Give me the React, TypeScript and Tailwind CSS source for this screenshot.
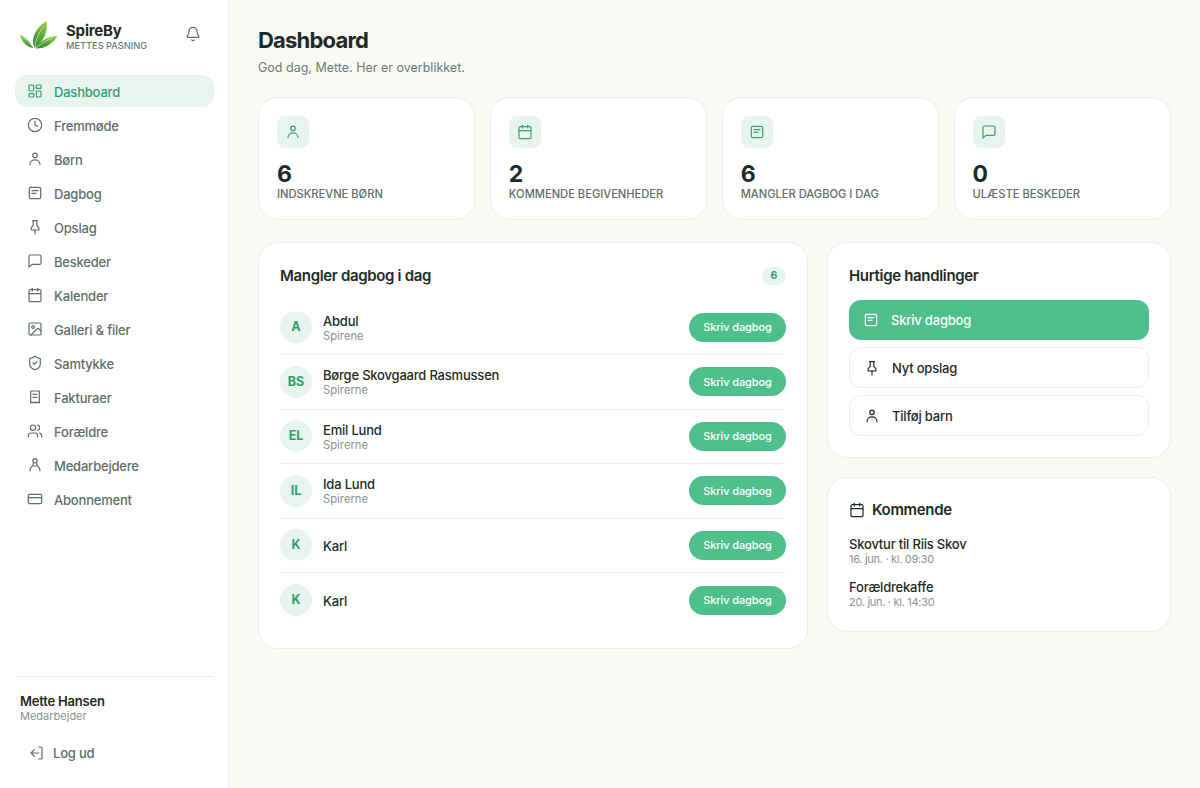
import type { ComponentType, ReactNode } from 'react';
import { Bell, Calendar, Clock, CreditCard, Image, LayoutDashboard, ShieldCheck, Users } from 'lucide-react';

type IconProps = { className?: string; strokeWidth?: number };

function Svg({ className, children }: { className?: string; children: ReactNode }) {
  return (
    <svg viewBox="0 0 24 24" fill="none" stroke="currentColor" strokeWidth="1.8" strokeLinecap="round" strokeLinejoin="round" className={className}>
      {children}
    </svg>
  );
}

const PersonIcon = (p: IconProps) => (
  <Svg className={p.className}>
    <circle cx="12" cy="6.5" r="3.4" />
    <path d="M4.5 20.5c0-4.400 3.300-7.200 7.500-7.200s7.500 2.800 7.500 7.200" />
  </Svg>
);
const BookIcon = (p: IconProps) => (
  <Svg className={p.className}>
    <rect x="3.5" y="3.5" width="17" height="17" rx="2.2" />
    <path d="M7.500 8.500h9M7.500 12.500h6" />
  </Svg>
);
const PinIcon = (p: IconProps) => (
  <Svg className={p.className}>
    <path d="M12 17v5" />
    <path d="M8.500 2.500h7l-.8 1.500v5.500l3 3.500v3.500H6.300V13l3-3.500V4z" />
  </Svg>
);
const ChatIcon = (p: IconProps) => (
  <Svg className={p.className}>
    <path d="M21 15a2 2 0 0 1-2 2H7.500L3 21V5a2 2 0 0 1 2-2h14a2 2 0 0 1 2 2z" />
  </Svg>
);
const ReceiptIcon = (p: IconProps) => (
  <Svg className={p.className}>
    <path d="M5.500 3h13v18l-2.200-1.300-2.100 1.300-2.200-1.300-2.200 1.300-2.100-1.300L5.500 21z" />
    <path d="M9 8h6M9 12.500h6" />
  </Svg>
);
const StaffIcon = (p: IconProps) => (
  <Svg className={p.className}>
    <circle cx="12" cy="5.500" r="3.200" />
    <path d="M9.500 9c0 2 .2 3-1.500 4.300-2 1.500-3.500 4-3.500 7.500M14.500 9c0 2-.2 3 1.500 4.300 2 1.500 3.500 4 3.500 7.500" />
    <path d="M8.500 13.500h7" />
  </Svg>
);
const LogoutIcon = (p: IconProps) => (
  <Svg className={p.className}>
    <path d="M16 3h3.500A1.500 1.500 0 0 1 21 4.500v15a1.500 1.500 0 0 1-1.500 1.500H16" />
    <path d="M9.500 7l-5 5 5 5M4.500 12H16" />
  </Svg>
);

function Logo() {
  return (
    <svg viewBox="0 0 38 30" className="mb-[2px] h-[30px] w-[38px] shrink-0">
      <defs>
        <linearGradient id="leafMid" x1="0.8" y1="0" x2="0.2" y2="1">
          <stop offset="0" stopColor="#8ecb3f" />
          <stop offset="1" stopColor="#2e8a2e" />
        </linearGradient>
        <linearGradient id="leafSide" x1="0" y1="0" x2="1" y2="1">
          <stop offset="0" stopColor="#93cd40" />
          <stop offset="1" stopColor="#2e8a2e" />
        </linearGradient>
      </defs>
      <path d="M14.500 28C10 18 16 8 26.500 1c1.500 10-1.500 19-12 27z" fill="url(#leafMid)" />
      <path d="M13.500 28C9 21 6 17 0 15c2 7 6 12 13.500 13z" fill="url(#leafSide)" />
      <path d="M15.500 28.500c3-6 11-12 22-12.500-5 8-13 13-22 12.500z" fill="url(#leafMid)" />
      <path d="M14.800 28C15.500 20 19 12 24 6" fill="none" stroke="#e4f2cf" strokeWidth="0.7" />
      <path d="M16.500 28c5-4.500 10-8 16-10" fill="none" stroke="#e4f2cf" strokeWidth="0.7" />
      <path d="M13 27.500C10 23 7 20 3 17.500" fill="none" stroke="#e4f2cf" strokeWidth="0.7" />
    </svg>
  );
}

type NavItem = { label: string; icon: ComponentType<IconProps>; active?: boolean };

const navItems: NavItem[] = [
  { label: 'Dashboard', icon: LayoutDashboard, active: true },
  { label: 'Fremmøde', icon: Clock },
  { label: 'Børn', icon: PersonIcon },
  { label: 'Dagbog', icon: BookIcon },
  { label: 'Opslag', icon: PinIcon },
  { label: 'Beskeder', icon: ChatIcon },
  { label: 'Kalender', icon: Calendar },
  { label: 'Galleri & filer', icon: Image },
  { label: 'Samtykke', icon: ShieldCheck },
  { label: 'Fakturaer', icon: ReceiptIcon },
  { label: 'Forældre', icon: Users },
  { label: 'Medarbejdere', icon: StaffIcon },
  { label: 'Abonnement', icon: CreditCard },
];

const stats: { value: string; label: string; icon: ComponentType<IconProps> }[] = [
  { value: '6', label: 'INDSKREVNE BØRN', icon: PersonIcon },
  { value: '2', label: 'KOMMENDE BEGIVENHEDER', icon: Calendar },
  { value: '6', label: 'MANGLER DAGBOG I DAG', icon: BookIcon },
  { value: '0', label: 'ULÆSTE BESKEDER', icon: ChatIcon },
];

const missing = [
  { initials: 'A', name: 'Abdul', group: 'Spirene' },
  { initials: 'BS', name: 'Børge Skovgaard Rasmussen', group: 'Spirerne' },
  { initials: 'EL', name: 'Emil Lund', group: 'Spirerne' },
  { initials: 'IL', name: 'Ida Lund', group: 'Spirerne' },
  { initials: 'K', name: 'Karl', group: null },
  { initials: 'K', name: 'Karl', group: null },
];

function Sidebar() {
  return (
    <aside className="flex h-[788px] w-[229px] shrink-0 flex-col border-r border-[#eeece6] bg-white">
      <div className="flex items-center pl-[20px] pr-[27px] pt-[20px]">
        <Logo />
        <div className="ml-[8px] flex-1">
          <div className="text-[15px] font-bold leading-[18px] tracking-[-0.2px] text-[#1c2b25]">SpireBy</div>
          <div className="text-[9.25px] font-medium leading-[11px] text-[#6b7c74]">METTES PASNING</div>
        </div>
        <Bell strokeWidth={1.8} className="mb-[5px] h-4 w-4 text-[#5d6f67]" />
      </div>
      <nav className="mt-[23px] flex flex-col gap-[2px] pl-[15px] pr-[14px]">
        {navItems.map((item) => {
          const Icon = item.icon;
          return (
            <div
              key={item.label}
              className={`flex h-[32px] items-center gap-[11px] rounded-[12px] px-[12px] text-[13px] font-medium tracking-[-0.2px] ${
                item.active ? 'bg-[#e8f5ee] text-[#2f9e6e]' : 'text-[#5d6f67]'
              }`}
            >
              <Icon strokeWidth={1.8} className="h-4 w-4 shrink-0" />
              <span className="pt-[3px]">{item.label}</span>
            </div>
          );
        })}
      </nav>
      <div className="ml-[15px] mr-[14px] mt-auto border-t border-[#eeece6] pb-[19px] pt-[16px]">
        <div className="px-[5px] text-[13px] font-semibold leading-[16px] tracking-[-0.2px] text-[#1c2b25]">Mette Hansen</div>
        <div className="px-[5px] text-[11px] leading-[14px] text-[#87958f]">Medarbejder</div>
        <div className="mt-[14px] flex h-[32px] items-center gap-[9px] px-[13px] text-[13px] font-medium tracking-[-0.2px] text-[#5d6f67]">
          <LogoutIcon className="h-4 w-4 shrink-0" />
          <span className="pt-[2px]">Log ud</span>
        </div>
      </div>
    </aside>
  );
}

function StatCard({ value, label, icon: Icon }: (typeof stats)[number]) {
  return (
    <div className="h-[123px] rounded-[20px] border border-[#eeece6] bg-white px-[18px] pt-[18px]">
      <div className="flex h-[32px] w-[32px] items-center justify-center rounded-[8px] bg-[#e8f5ee] text-[#35a474]">
        <Icon strokeWidth={1.8} className="h-4 w-4" />
      </div>
      <div className="mt-[14px] text-[23px] font-bold leading-[25px] text-[#1c2b25]">{value}</div>
      <div className="text-[11.15px] font-medium leading-[14px] text-[#5d6f67]">{label}</div>
    </div>
  );
}

function MissingCard() {
  return (
    <section className="h-[407px] w-[550px] rounded-[20px] border border-[#eeece6] bg-white px-[21px] pt-[22px]">
      <div className="flex items-center justify-between">
        <h2 className="text-[15px] font-semibold leading-[22px] tracking-[-0.33px] text-[#1c2b25]">Mangler dagbog i dag</h2>
        <span className="flex h-[18px] w-[24px] items-center justify-center rounded-full bg-[#e8f5ee] text-[10.5px] font-bold text-[#2f9e6e]">6</span>
      </div>
      <div className="mt-[13.5px]">
        {missing.map((child, i) => (
          <div
            key={i}
            className={`flex h-[54.5px] items-center justify-between ${i < missing.length - 1 ? 'border-b border-[#eeece6]' : ''}`}
          >
            <div className="flex items-center gap-[11px]">
              <div className="flex h-[32px] w-[32px] items-center justify-center rounded-full bg-[#e8f5ee] pt-[1px] text-[12.5px] font-bold text-[#2f9e6e]">
                {child.initials}
              </div>
              <div className={child.group ? 'pt-[1px]' : 'pt-[2px]'}>
                <div className="text-[13px] font-medium leading-[16px] tracking-[-0.2px] text-[#1c2b25]">{child.name}</div>
                {child.group && <div className="text-[11.25px] leading-[14px] text-[#87958f]">{child.group}</div>}
              </div>
            </div>
            <button type="button" className="h-[29px] w-[97px] rounded-full bg-[#4dbf8a] text-[11px] font-medium tracking-[-0.1px] text-white">
              Skriv dagbog
            </button>
          </div>
        ))}
      </div>
    </section>
  );
}

function QuickActions() {
  return (
    <section className="h-[216px] rounded-[20px] border border-[#eeece6] bg-white px-[21px] pt-[22px]">
      <h2 className="text-[15px] font-semibold leading-[22px] tracking-[-0.33px] text-[#1c2b25]">Hurtige handlinger</h2>
      <div className="mt-[13px] flex h-[40px] items-center gap-[12px] rounded-[12px] bg-[#4dbf8a] px-[14px] text-[13px] font-medium tracking-[-0.2px] text-white">
        <BookIcon className="h-4 w-4" />
        <span className="pt-[2px]">Skriv dagbog</span>
      </div>
      <div className="mt-[7px] flex h-[41px] items-center gap-[12px] rounded-[12px] border border-[#eeece6] px-[14px] text-[13px] font-medium tracking-[-0.2px] text-[#1c2b25]">
        <PinIcon className="h-4 w-4" />
        <span className="pt-[2px]">Nyt opslag</span>
      </div>
      <div className="mt-[7px] flex h-[41px] items-center gap-[12px] rounded-[12px] border border-[#eeece6] px-[14px] text-[13px] font-medium tracking-[-0.2px] text-[#1c2b25]">
        <PersonIcon className="h-4 w-4" />
        <span className="pt-[2px]">Tilføj barn</span>
      </div>
    </section>
  );
}

function Upcoming() {
  return (
    <section className="h-[155px] rounded-[20px] border border-[#eeece6] bg-white px-[21px] pt-[21px]">
      <div className="flex items-center gap-[7px]">
        <Calendar strokeWidth={1.8} className="h-4 w-4 text-[#1c2b25]" />
        <h2 className="text-[15px] font-semibold leading-[22px] tracking-[-0.33px] text-[#1c2b25]">Kommende</h2>
      </div>
      <div className="mt-[15px] text-[13px] font-medium leading-[16px] tracking-[-0.2px] text-[#1c2b25]">Skovtur til Riis Skov</div>
      <div className="text-[11px] leading-[14px] tracking-[-0.3px] text-[#87958f]">16. jun. · kl. 09:30</div>
      <div className="mt-[13px] text-[13px] font-medium leading-[16px] tracking-[-0.2px] text-[#1c2b25]">Forældrekaffe</div>
      <div className="text-[11px] leading-[14px] tracking-[-0.3px] text-[#87958f]">20. jun. · kl. 14:30</div>
    </section>
  );
}

export default function App() {
  return (
    <div className="flex h-[788px] w-[1200px] overflow-hidden bg-[#faf9f6] font-['Inter',sans-serif]">
      <Sidebar />
      <main className="flex-1 px-[29px] pt-[26px]">
        <h1 className="text-[22px] font-bold leading-[28px] tracking-[-0.8px] text-[#1c2b25]">Dashboard</h1>
        <p className="mt-[5px] text-[12.5px] leading-[18px] text-[#6b7c74]">God dag, Mette. Her er overblikket.</p>
        <div className="mt-[20px] grid grid-cols-4 gap-[14.4px]">
          {stats.map((s) => (
            <StatCard key={s.label} {...s} />
          ))}
        </div>
        <div className="mt-[22px] flex items-start gap-[19px]">
          <MissingCard />
          <div className="flex flex-1 flex-col gap-[19px]">
            <QuickActions />
            <Upcoming />
          </div>
        </div>
      </main>
    </div>
  );
}
